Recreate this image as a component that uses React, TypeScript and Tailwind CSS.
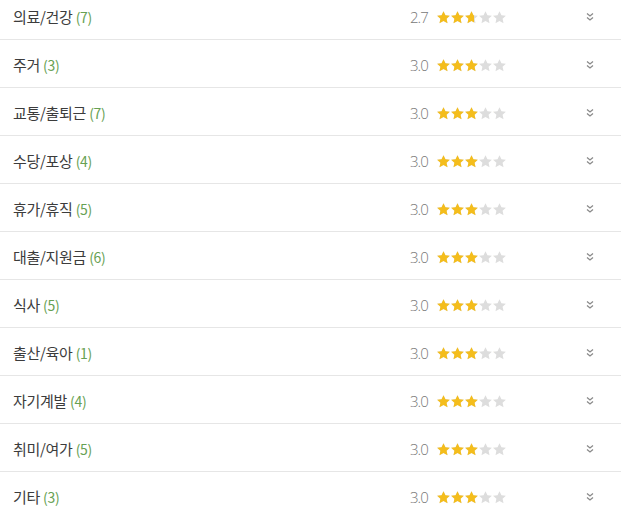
import React from "react";

const rows: { name: string; count: number; score: number }[] = [
  { name: "의료/건강", count: 7, score: 2.7 },
  { name: "주거", count: 3, score: 3.0 },
  { name: "교통/출퇴근", count: 7, score: 3.0 },
  { name: "수당/포상", count: 4, score: 3.0 },
  { name: "휴가/휴직", count: 5, score: 3.0 },
  { name: "대출/지원금", count: 6, score: 3.0 },
  { name: "식사", count: 5, score: 3.0 },
  { name: "출산/육아", count: 1, score: 3.0 },
  { name: "자기계발", count: 4, score: 3.0 },
  { name: "취미/여가", count: 5, score: 3.0 },
  { name: "기타", count: 3, score: 3.0 },
];

const STAR =
  "M12 2.5l2.9 6.2 6.6.7-4.9 4.5 1.4 6.6L12 17.1l-6 3.4 1.4-6.6L2.5 9.4l6.6-.7z";

function Star({ fill, id }: { fill: number; id: string }) {
  return (
    <svg width="13" height="13" viewBox="2.3 2.3 19.4 19.4">
      <defs>
        <clipPath id={id}>
          <rect x="0" y="0" width={2.5 + 19 * fill} height="24" />
        </clipPath>
      </defs>
      <path d={STAR} fill="#dddddd" />
      <path d={STAR} fill="#f4bd1c" clipPath={`url(#${id})`} />
    </svg>
  );
}

function Stars({ score, idx }: { score: number; idx: number }) {
  return (
    <div className="flex items-center gap-[1px]">
      {[0, 1, 2, 3, 4].map((i) => {
        const f = Math.max(0, Math.min(1, score - i));
        return <Star key={i} fill={f} id={`s${idx}-${i}`} />;
      })}
    </div>
  );
}

function Chevrons() {
  return (
    <svg width="12" height="12" viewBox="0 0 12 12" fill="none" stroke="#8a8a8a" strokeWidth="1.3">
      <path d="M3 2.5l3 2.5 3-2.5" />
      <path d="M3 6.5l3 2.5 3-2.5" />
    </svg>
  );
}

export default function App() {
  return (
    <div
      className="w-[621px] h-[509px] overflow-hidden bg-white"
      style={{ fontFamily: '"Noto Sans CJK KR", "Noto Sans", sans-serif' }}
    >
      <div className="-mt-[8px]">
        {rows.map((r, i) => (
          <div
            key={i}
            className="h-[48px] flex items-center border-b border-[#e6e6e6] pt-[3px]"
          >
            <div className="pl-[13px] w-[410px] text-[15px] text-[#3c3c3c] tracking-[-0.3px]">
              {r.name}{" "}
              <span className="text-[#67a153] text-[14px]">({r.count})</span>
            </div>
            <div
              className="w-[27px] text-[15px] text-[#777] font-light tracking-[-1px]"
              style={{ fontFamily: '"Open Sans", sans-serif' }}
            >
              {r.score.toFixed(1)}
            </div>
            <Stars score={r.score} idx={i} />
            <div className="ml-[78px] flex items-center">
              <Chevrons />
            </div>
          </div>
        ))}
      </div>
    </div>
  );
}
